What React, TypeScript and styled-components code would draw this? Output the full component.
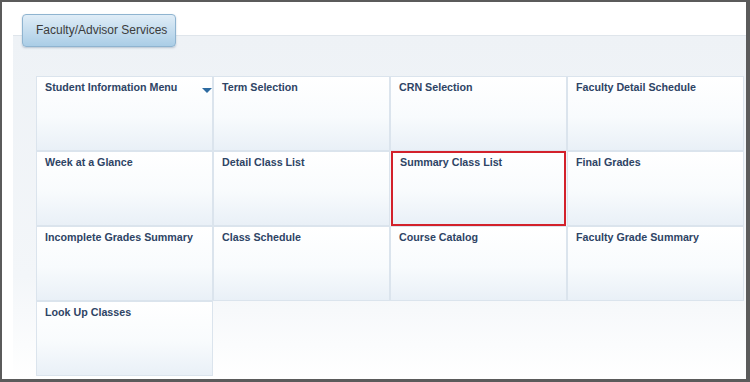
import React from "react";
import styled, { createGlobalStyle } from "styled-components";

const GlobalStyle = createGlobalStyle`
  html, body {
    margin: 0;
    padding: 0;
    background: #ffffff;
  }
  * {
    box-sizing: border-box;
  }
`;

const Frame = styled.div`
  width: 750px;
  height: 382px;
  border-style: solid;
  border-color: #5b5b5b;
  border-width: 2px 4px 3px 2px;
  background: #ffffff;
  padding: 12px 0 0 11px;
  font-family: "Liberation Sans", Arial, sans-serif;
  overflow: hidden;
`;

const Tab = styled.div`
  position: relative;
  z-index: 1;
  width: 154px;
  height: 33px;
  margin-left: 9px;
  margin-bottom: -12px;
  border: 1px solid #8fb4d0;
  border-radius: 4px;
  background: linear-gradient(#e0edf7, #aacde6);
  box-shadow: 0 1px 2px rgba(80, 110, 140, 0.35);
  color: #3c3c3c;
  font-size: 12px;
  line-height: 31px;
  padding-left: 13px;
`;

const Panel = styled.div`
  border-top: 1px solid #dfe5eb;
  background: linear-gradient(#eef2f6 0%, #f3f6f9 70%, #ffffff 100%);
  padding: 40px 0 0 23px;
  height: 344px;
`;

const Grid = styled.div`
  display: grid;
  grid-template-columns: repeat(4, 177px);
  grid-auto-rows: 75px;
`;

const Cell = styled.div<{ $active?: boolean }>`
  position: relative;
  border: ${(p) => (p.$active ? "2px solid #d3212b" : "1px solid #dbe4ed")};
  margin: ${(p) => (p.$active ? "0 1px 0 1px" : "0")};
  background: linear-gradient(#ffffff 0%, #f8fbfd 55%, #e9f0f7 100%);
  padding: ${(p) => (p.$active ? "3px 7px" : "4px 8px")};
  color: #2e4465;
  font-size: 10.7px;
  font-weight: bold;
`;

const Arrow = styled.span`
  position: absolute;
  right: 0;
  top: 11px;
  width: 0;
  height: 0;
  border-left: 5px solid transparent;
  border-right: 5px solid transparent;
  border-top: 5px solid #2c6aa0;
`;

const items = [
  "Student Information Menu",
  "Term Selection",
  "CRN Selection",
  "Faculty Detail Schedule",
  "Week at a Glance",
  "Detail Class List",
  "Summary Class List",
  "Final Grades",
  "Incomplete Grades Summary",
  "Class Schedule",
  "Course Catalog",
  "Faculty Grade Summary",
  "Look Up Classes",
];

const App: React.FC = () => {
  return (
    <>
      <GlobalStyle />
      <Frame>
        <Tab>Faculty/Advisor Services</Tab>
        <Panel>
          <Grid>
            {items.map((label, i) => (
              <Cell key={label} $active={label === "Summary Class List"}>
                {label}
                {i === 0 && <Arrow />}
              </Cell>
            ))}
          </Grid>
        </Panel>
      </Frame>
    </>
  );
};

export default App;
